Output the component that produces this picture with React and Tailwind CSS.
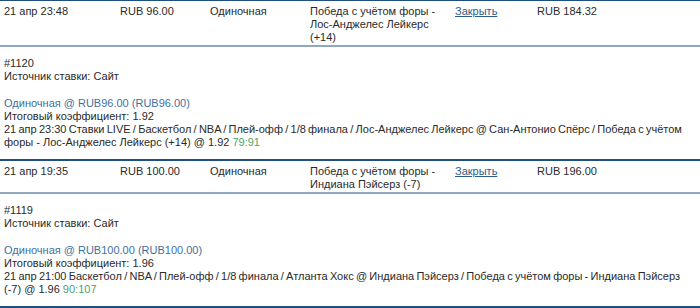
const bets = [
  {
    date: '21 апр 23:48',
    stake: 'RUB 96.00',
    type: 'Одиночная',
    selection: 'Победа с учётом форы - Лос-Анджелес Лейкерс (+14)',
    ret: 'RUB 184.32',
    id: '#1120',
    summary: 'Одиночная @ RUB96.00 (RUB96.00)',
    odds: '1.92',
    leg1: '21 апр 23:30 Ставки LIVE / Баскетбол / NBA / Плей-офф / 1/8 финала / Лос-Анджелес Лейкерс @ Сан-Антонио Спёрс / Победа с учётом',
    leg2: 'форы - Лос-Анджелес Лейкерс (+14) @ 1.92',
    score: '79:91',
  },
  {
    date: '21 апр 19:35',
    stake: 'RUB 100.00',
    type: 'Одиночная',
    selection: 'Победа с учётом форы - Индиана Пэйсерз (-7)',
    ret: 'RUB 196.00',
    id: '#1119',
    summary: 'Одиночная @ RUB100.00 (RUB100.00)',
    odds: '1.96',
    leg1: '21 апр 21:00 Баскетбол / NBA / Плей-офф / 1/8 финала / Атланта Хокс @ Индиана Пэйсерз / Победа с учётом форы - Индиана Пэйсерз',
    leg2: '(-7) @ 1.96',
    score: '90:107',
  },
];

function BetRow({ bet, first }) {
  return (
    <div className={first ? 'border-t border-[#1f4f80]' : 'border-t-2 border-[#1f4f80]'}>
      <div className="grid grid-cols-[116px_90px_100px_145px_82px_1fr] pt-[4px] pb-[1px] border-b-2 border-[#8ea8c3]">
        <div className="pl-[4px]">{bet.date}</div>
        <div className="pl-[4px]">{bet.stake}</div>
        <div className="pl-[4px]">{bet.type}</div>
        <div className="pl-[4px] pr-[4px]">{bet.selection}</div>
        <div className="pl-[4px]">
          <a href="#" className="text-[#2d5b8a] underline">Закрыть</a>
        </div>
        <div className="pl-[4px]">{bet.ret}</div>
      </div>
      <div className="pl-[4px] pr-[4px] pt-[10px] pb-[10px]">
        <div>{bet.id}</div>
        <div>Источник ставки: Сайт</div>
        <div className="mt-[14px] text-[#3f6f9f]">{bet.summary}</div>
        <div>Итоговый коэффициент: {bet.odds}</div>
        <div className="whitespace-nowrap [word-spacing:-0.8px]">{bet.leg1}</div>
        <div className="whitespace-nowrap">
          {bet.leg2} <span className="text-[#4f9f6a]">{bet.score}</span>
        </div>
      </div>
    </div>
  );
}

export default function App() {
  return (
    <div className="w-[700px] h-[308px] overflow-hidden bg-white text-[#2a2a2a] text-[11px] leading-[13px] font-['Liberation_Sans',Arial,sans-serif]">
      {bets.map((bet, i) => (
        <BetRow key={bet.id} bet={bet} first={i === 0} />
      ))}
      <div className="border-t-2 border-[#1f4f80]" />
    </div>
  );
}
